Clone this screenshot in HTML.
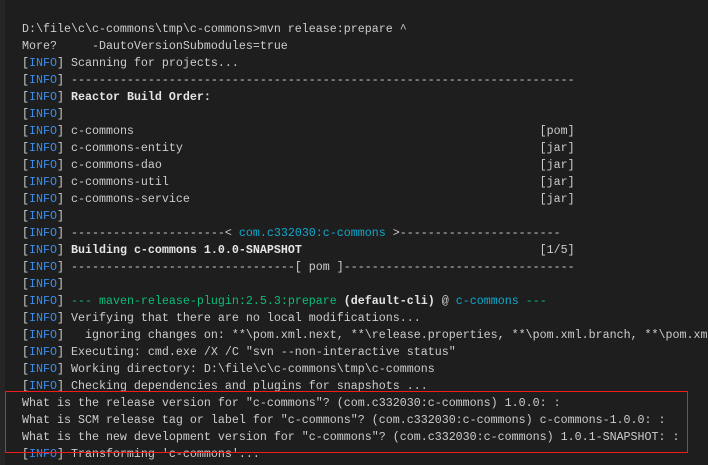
<!DOCTYPE html>
<html><head><meta charset="utf-8"><style>
html,body{margin:0;padding:0;}
body{width:708px;height:465px;background:#1e1e1e;overflow:hidden;position:relative;}
.strip{position:absolute;left:0;top:0;width:5px;height:465px;background:#252526;}
pre{margin:0;position:absolute;left:22px;top:21px;font-family:"Liberation Mono",monospace;font-size:11.67px;line-height:17px;color:#cccccc;white-space:pre;}
.i{color:#3b8eea}
.c{color:#11a8cd}
.g{color:#0dbc79}
b{font-weight:bold;color:#e5e5e5}
.r{position:absolute;background:#f01c1c;z-index:5;}
</style></head><body>
<div class="strip"></div>
<pre>D:\file\c\c-commons\tmp\c-commons&gt;mvn release:prepare ^
More?     -DautoVersionSubmodules=true
[<span class="i">INFO</span>] Scanning for projects...
[<span class="i">INFO</span>] ------------------------------------------------------------------------
[<span class="i">INFO</span>] <b>Reactor Build Order:</b>
[<span class="i">INFO</span>]
[<span class="i">INFO</span>] c-commons                                                          [pom]
[<span class="i">INFO</span>] c-commons-entity                                                   [jar]
[<span class="i">INFO</span>] c-commons-dao                                                      [jar]
[<span class="i">INFO</span>] c-commons-util                                                     [jar]
[<span class="i">INFO</span>] c-commons-service                                                  [jar]
[<span class="i">INFO</span>]
[<span class="i">INFO</span>] ----------------------&lt; <span class="c">com.c332030:c-commons</span> &gt;-----------------------
[<span class="i">INFO</span>] <b>Building c-commons 1.0.0-SNAPSHOT</b>                                  [1/5]
[<span class="i">INFO</span>] --------------------------------[ pom ]---------------------------------
[<span class="i">INFO</span>]
[<span class="i">INFO</span>] <span class="g">--- maven-release-plugin:2.5.3:prepare</span> <b>(default-cli)</b> @ <span class="c">c-commons</span> <span class="g">---</span>
[<span class="i">INFO</span>] Verifying that there are no local modifications...
[<span class="i">INFO</span>]   ignoring changes on: **\pom.xml.next, **\release.properties, **\pom.xml.branch, **\pom.xml.tag
[<span class="i">INFO</span>] Executing: cmd.exe /X /C "svn --non-interactive status"
[<span class="i">INFO</span>] Working directory: D:\file\c\c-commons\tmp\c-commons
[<span class="i">INFO</span>] Checking dependencies and plugins for snapshots ...
What is the release version for "c-commons"? (com.c332030:c-commons) 1.0.0: :
What is SCM release tag or label for "c-commons"? (com.c332030:c-commons) c-commons-1.0.0: :
What is the new development version for "c-commons"? (com.c332030:c-commons) 1.0.1-SNAPSHOT: :
[<span class="i">INFO</span>] Transforming 'c-commons'...</pre>
<div class="r" style="left:5px;top:391px;width:683px;height:1px"></div>
<div class="r" style="left:5px;top:452px;width:683px;height:1px"></div>
<div class="r" style="left:5px;top:391px;width:1px;height:62px"></div>
<div class="r" style="left:687px;top:391px;width:1px;height:62px"></div>
</body></html>
